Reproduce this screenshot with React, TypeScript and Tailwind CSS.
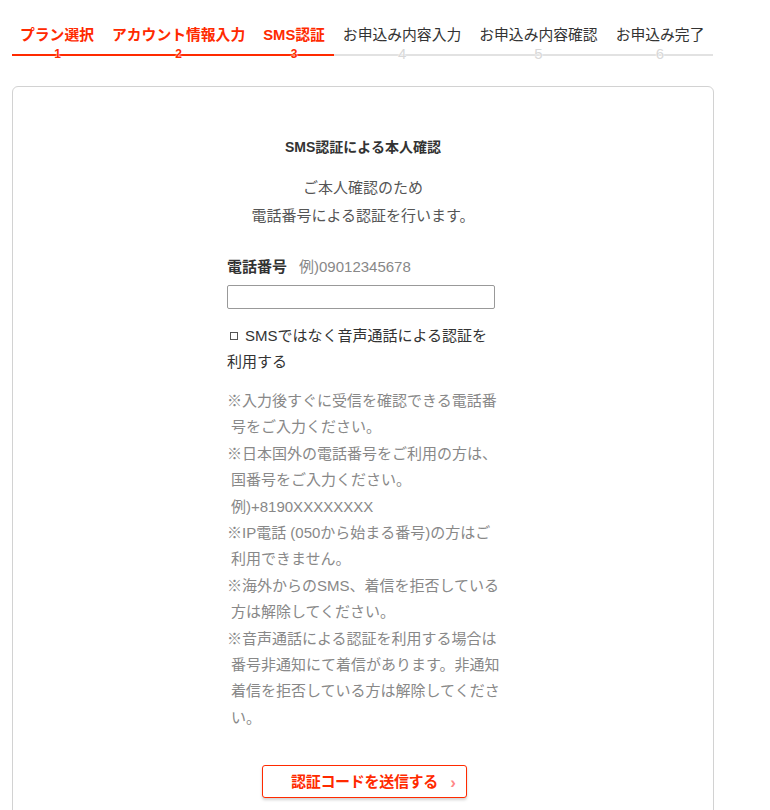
import React from "react";

const steps = [
  { label: "プラン選択", n: 1, active: true },
  { label: "アカウント情報入力", n: 2, active: true },
  { label: "SMS認証", n: 3, active: true },
  { label: "お申込み内容入力", n: 4, active: false },
  { label: "お申込み内容確認", n: 5, active: false },
  { label: "お申込み完了", n: 6, active: false },
];

const notes: string[][] = [
  ["※入力後すぐに受信を確認できる電話番", "号をご入力ください。"],
  ["※日本国外の電話番号をご利用の方は、", "国番号をご入力ください。", "例)+8190XXXXXXXX"],
  ["※IP電話 (050から始まる番号)の方はご", "利用できません。"],
  ["※海外からのSMS、着信を拒否している", "方は解除してください。"],
  ["※音声通話による認証を利用する場合は", "番号非通知にて着信があります。非通知", "着信を拒否している方は解除してくださ", "い。"],
];

export default function App() {
  return (
    <div className="w-[770px] min-h-[810px] bg-white pt-[24px] pl-[12px] font-['Liberation_Sans','Noto_Sans_CJK_JP',sans-serif] text-[#333] overflow-hidden">
      <div className="flex w-[702px]">
        {steps.map((s, i) => (
          <div
            key={s.n}
            className={`flex flex-col ${i === 0 ? "pl-[8px] pr-[9px]" : "px-[9px]"}`}
          >
            <div className="flex justify-center">
              <span
                className={
                  s.active
                    ? "text-[14.8px] leading-[22px] font-bold text-[#ff2a00] whitespace-nowrap"
                    : "text-[14.8px] leading-[22px] text-[#333] whitespace-nowrap"
                }
              >
                {s.label}
              </span>
            </div>
            <div className="h-[8px]" />
            <div className={`relative h-[2px] -mx-[9px] ${i === 0 ? "-ml-[8px]" : ""} ${s.active ? "bg-[#ff2a00]" : "bg-[#e2e2e2]"}`}>
              <span
                className={
                  s.active
                    ? "absolute left-1/2 top-[-7px] -translate-x-1/2 text-[12px] leading-[14px] font-bold text-[#ff2a00] [text-shadow:0_0_2px_#fff,0_0_1px_#fff]"
                    : "absolute left-1/2 top-[-8px] -translate-x-1/2 text-[15px] leading-[16px] text-[#d8d8d8] [text-shadow:0_0_2px_#fff,0_0_1px_#fff]"
                }
              >
                {s.n}
              </span>
            </div>
          </div>
        ))}
      </div>

      <div className="mt-[30px] w-[702px] h-[760px] border border-[#d2d2d2] rounded-[6px] pt-[50px]">
        <div className="text-center text-[14px] leading-[20px] font-bold text-[#333]">SMS認証による本人確認</div>
        <div className="mt-[17px] text-center text-[15px] leading-[28px] text-[#555]">
          <div>ご本人確認のため</div>
          <div>電話番号による認証を行います。</div>
        </div>

        <div className="flex justify-center pr-[6px]">
          <div className="w-[270px] pl-[2px]">
            <div className="mt-[27px] flex items-center gap-[12px] leading-[20px]">
              <span className="text-[15px] font-bold text-[#333]">電話番号</span>
              <span className="text-[15px] text-[#888]">例)09012345678</span>
            </div>
            <div className="mt-[8px] h-[24px] w-[268px] border border-[#999] rounded-[2px] bg-white" />
            <div className="mt-[14px] text-[15px] leading-[26px] text-[#333]">
              <div className="flex items-center whitespace-nowrap">
                <span className="inline-block w-[8px] h-[8px] border border-[#555] ml-[3px] mr-[7px]" />
                SMSではなく音声通話による認証を
              </div>
              <div>利用する</div>
            </div>
            <div className="mt-[13px] text-[15px] leading-[26.4px] text-[#888]">
              {notes.map((group, gi) => (
                <div key={gi}>
                  {group.map((line, li) => (
                    <div key={li} className={`whitespace-nowrap ${li > 0 ? "pl-[4px]" : ""}`}>
                      {line}
                    </div>
                  ))}
                </div>
              ))}
            </div>
          </div>
        </div>

        <div className="mt-[34px] flex justify-center">
          <div className="relative ml-[3px] w-[205px] h-[33px] border border-[#ff2a00] rounded-[3px] shadow-[0_2px_3px_rgba(0,0,0,0.18)] flex items-center justify-center bg-white">
            <span className="text-[15px] font-bold text-[#ff2a00] tracking-[-0.3px]">認証コードを送信する</span>
            <span className="absolute right-[10px] top-1/2 -translate-y-1/2 text-[17px] leading-none font-bold text-[#f88]">›</span>
          </div>
        </div>
      </div>
    </div>
  );
}
